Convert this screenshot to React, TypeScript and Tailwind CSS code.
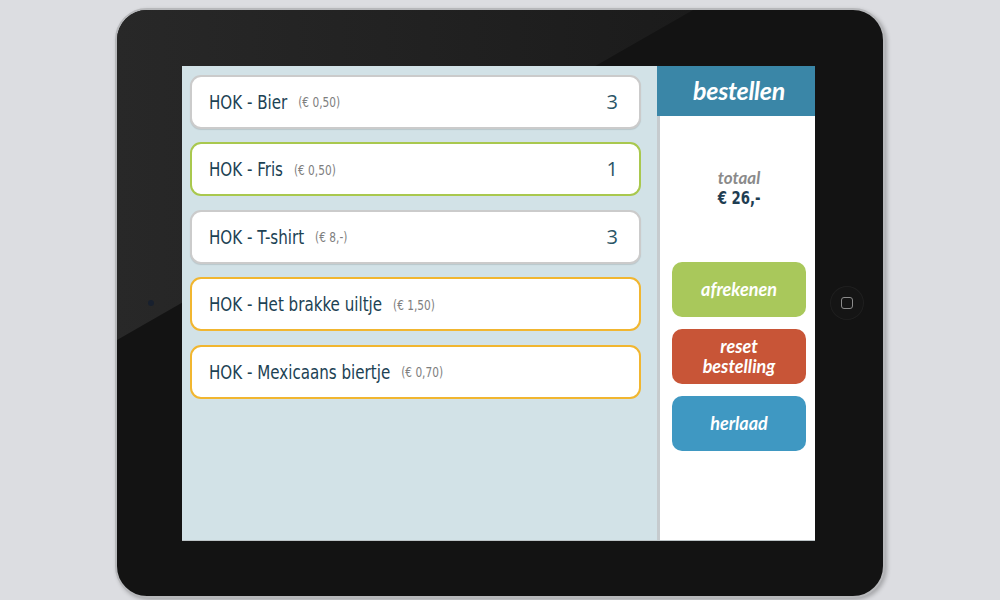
import clsx from 'clsx';

type OrderLine = {
  name: string;
  price: string;
  qty?: number;
  tone: 'gray' | 'green' | 'yellow';
};

const LINES: OrderLine[] = [
  { name: 'HOK - Bier', price: '(€ 0,50)', qty: 3, tone: 'gray' },
  { name: 'HOK - Fris', price: '(€ 0,50)', qty: 1, tone: 'green' },
  { name: 'HOK - T-shirt', price: '(€ 8,-)', qty: 3, tone: 'gray' },
  { name: 'HOK - Het brakke uiltje', price: '(€ 1,50)', tone: 'yellow' },
  { name: 'HOK - Mexicaans biertje', price: '(€ 0,70)', tone: 'yellow' },
];

// no condensed face is around, so the condensed look is squeezed out of DejaVu
const NARROW = "font-['DejaVu_Sans_Condensed','DejaVu_Sans',sans-serif]";
const SCRIPT = "font-['Lato','Open_Sans',sans-serif]";

const OrderRow = ({ line }: { line: OrderLine }) => (
  <div
    className={clsx(
      'flex h-[54px] items-center rounded-[11px] border-2 bg-white pl-[17px] pr-[21px]',
      line.tone === 'gray' && 'border-[#cbcbcb] shadow-[0_1px_1px_rgba(0,0,0,0.12)]',
      line.tone === 'green' && 'border-[#a9c84e]',
      line.tone === 'yellow' && 'border-[#f1b630]',
    )}
  >
    <span className="inline-flex origin-left scale-x-[0.84] items-center whitespace-nowrap">
      <span className={clsx(NARROW, 'text-[20px] text-[#1c4254]')}>{line.name}</span>
      <span className={clsx(NARROW, 'ml-[13px] mt-[2px] text-[14px] text-[#7e7e7e]')}>
        {line.price}
      </span>
    </span>
    {line.qty !== undefined && (
      <span className="ml-auto font-['Open_Sans',sans-serif] text-[20px] text-[#2a5466]">
        {line.qty}
      </span>
    )}
  </div>
);

const ActionButton = ({
  color,
  children,
}: {
  color: string;
  children: React.ReactNode;
}) => (
  <button
    className={clsx(
      SCRIPT,
      'flex h-[55px] w-[134px] flex-col items-center justify-center rounded-[10px] text-[18px] font-bold italic leading-[20px] text-white',
      color,
    )}
  >
    {children}
  </button>
);

export default function App() {
  return (
    <div className="h-[600px] w-[1000px] overflow-hidden bg-[#dcdde1] pl-[115px] pt-[8px]">
      <div className="relative flex h-[590px] w-[770px] items-center overflow-hidden rounded-[32px] border-2 border-[#b7b8bb] bg-[#131313] shadow-[2px_2px_4px_rgba(0,0,0,0.25)]">
        {/* glass reflection */}
        <svg className="absolute inset-0" width="770" height="590">
          <defs>
            <linearGradient id="gloss" x1="0" y1="0" x2="1" y2="0">
              <stop offset="0" stopColor="#282828" />
              <stop offset="1" stopColor="#1b1b1b" />
            </linearGradient>
          </defs>
          <polygon points="0,0 576,0 0,330" fill="url(#gloss)" />
        </svg>

        {/* camera */}
        <div className="relative flex w-[65px] justify-center pl-[2px]">
          <div className="size-[6px] rounded-full bg-[#18202e]" />
        </div>

        {/* screen */}
        <div className="relative flex h-[475px] w-[633px] border-b border-[#bcc3c6]">
          <div className="flex w-[475px] flex-col gap-[13.5px] bg-[#d2e2e7] pl-[8px] pr-[16px] pt-[9px]">
            {LINES.map((line) => (
              <OrderRow key={line.name} line={line} />
            ))}
          </div>

          <div className="flex w-[158px] flex-col bg-white">
            <div className="flex h-[50px] items-center justify-center bg-[#3a86a7] pl-[6px]">
              <span className={clsx(SCRIPT, 'text-[25px] font-bold italic tracking-[-0.3px] text-white')}>
                bestellen
              </span>
            </div>
            <div className="flex flex-1 flex-col border-l-[3px] border-[#c6cbce] pl-[12px]">
              <div className="flex flex-col items-center pr-[9px] pt-[52px]">
                <span className={clsx(SCRIPT, 'text-[17px] font-bold italic leading-[20px] text-[#8a8a8a]')}>
                  totaal
                </span>
                <span
                  className={clsx(
                    NARROW,
                    'scale-x-[0.82] text-[18px] font-bold leading-[20px] text-[#1f3d52]',
                  )}
                >
                  € 26,-
                </span>
              </div>
              <div className="mt-[54px] flex flex-col gap-[12px]">
                <ActionButton color="bg-[#a9c85b]">afrekenen</ActionButton>
                <ActionButton color="bg-[#c85537]">
                  <span>reset</span>
                  <span>bestelling</span>
                </ActionButton>
                <ActionButton color="bg-[#3f98c2]">herlaad</ActionButton>
              </div>
            </div>
          </div>
        </div>

        {/* home button */}
        <div className="relative flex flex-1 justify-center pr-[4px]">
          <div className="flex size-[34px] items-center justify-center rounded-full bg-[#151515] shadow-[inset_0_0_0_1px_#1f1f1f]">
            <div className="size-[12px] rounded-[3px] border-[1.5px] border-[#8c8c8c]" />
          </div>
        </div>
      </div>
    </div>
  );
}
